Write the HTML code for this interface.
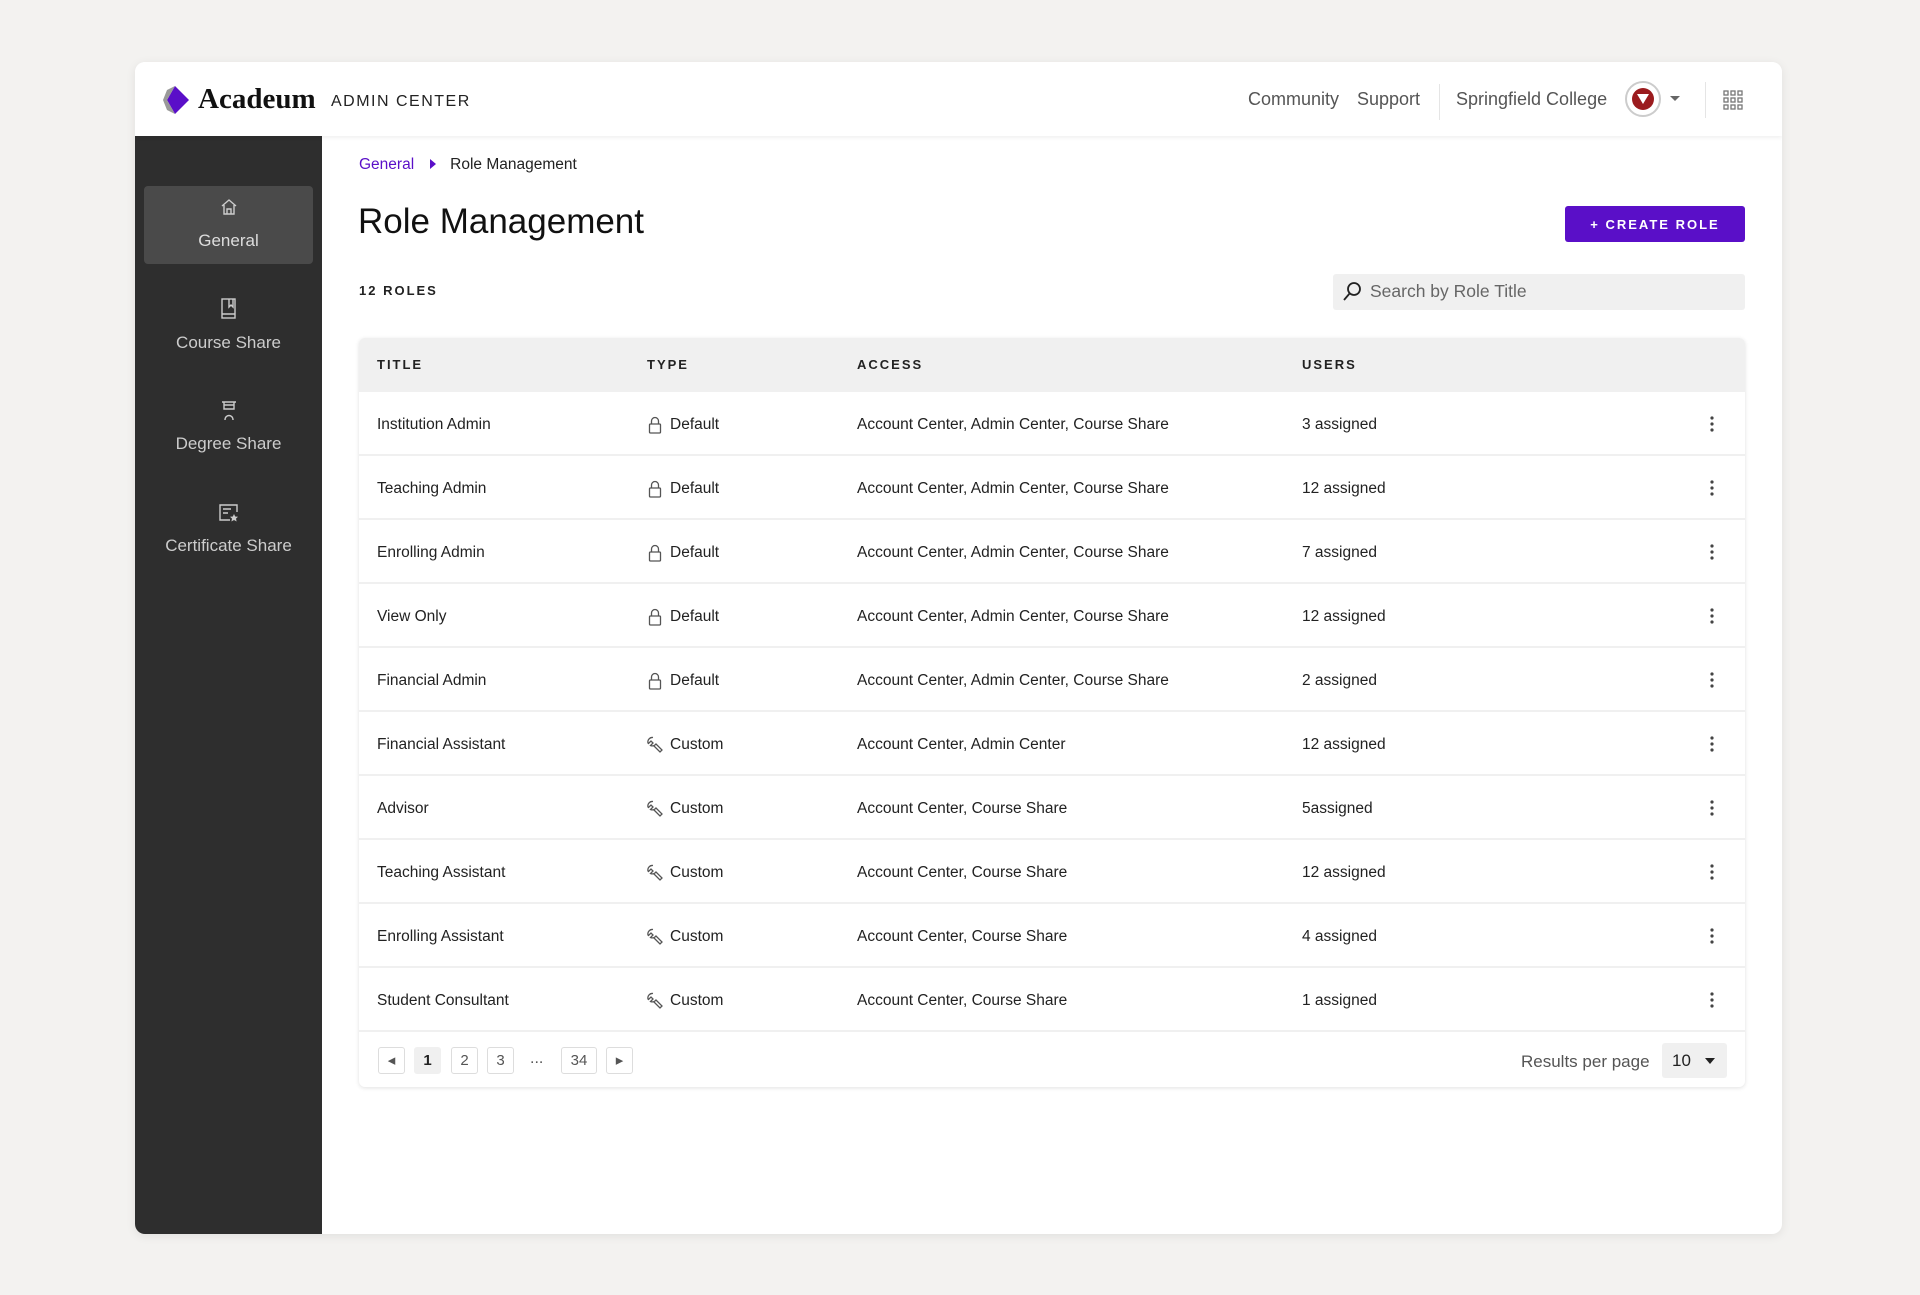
<!DOCTYPE html>
<html><head><meta charset="utf-8"><style>
*{box-sizing:border-box;margin:0;padding:0}
body{width:1920px;height:1295px;background:#f3f2f0;font-family:"Liberation Sans",sans-serif;color:#222;position:relative;overflow:hidden}
.card{position:absolute;left:135px;top:62px;width:1647px;height:1172px;background:#fff;border-radius:10px;box-shadow:0 2px 10px rgba(0,0,0,.08);overflow:hidden}
.hdr{position:absolute;left:0;top:0;width:100%;height:74px;background:#fff;box-shadow:0 2px 4px rgba(0,0,0,.06);z-index:2}
.side{position:absolute;left:0;top:74px;width:187px;bottom:0;background:#2e2e2e}
.abs{position:absolute}
.nav{font-size:18px;color:#555;top:27px}
.si{position:absolute;left:0;width:187px;text-align:center;color:#ccc;font-size:17px}
.row{position:absolute;left:359px;width:1386px;height:64px;border-bottom:2px solid #f0f0f0;font-size:15.5px;color:#222}
.row span{position:absolute;top:24px}
.th{position:absolute;top:19px;font-size:13px;font-weight:bold;letter-spacing:2px;color:#222}
.pb{position:absolute;top:1047px;height:27px;border:1px solid #ddd;border-radius:3px;font-size:15px;text-align:center;line-height:25px;color:#555}
</style></head><body>
<div class="card">
 <div class="hdr">
  <svg class="abs" style="left:28px;top:24px" width="26" height="28" viewBox="0 0 26 28"><polygon points="12,0 26,14 12,28 4,14" fill="#5a0fc8"/><polygon points="4,4 12,0 4,14 12,28 4,24 0,14" fill="#999"/></svg>
  <div class="abs" style="left:63px;top:21px;font-family:'Liberation Serif',serif;font-weight:bold;font-size:29px;color:#111">Acadeum</div>
  <div class="abs" style="left:196px;top:31px;font-size:16px;letter-spacing:1.5px;color:#222">ADMIN CENTER</div>
  <div class="abs nav" style="left:1113px">Community</div>
  <div class="abs nav" style="left:1222px">Support</div>
  <div class="abs" style="left:1304px;top:22px;width:1px;height:36px;background:#e5e5e5"></div>
  <div class="abs nav" style="left:1321px">Springfield College</div>
  <div class="abs" style="left:1490px;top:19px;width:36px;height:36px;border-radius:50%;border:2px solid #ccc;background:#fff"><div style="position:absolute;left:5px;top:5px;width:22px;height:22px;border-radius:50%;background:#9b1b1e"></div><div style="position:absolute;left:10px;top:11px;width:0;height:0;border-left:6px solid transparent;border-right:6px solid transparent;border-top:10px solid #fff"></div></div>
  <div class="abs" style="left:1535px;top:34px;border-left:5px solid transparent;border-right:5px solid transparent;border-top:5px solid #666"></div>
  <div class="abs" style="left:1570px;top:20px;width:1px;height:36px;background:#e5e5e5"></div>
  <svg class="abs" style="left:1588px;top:28px" width="20" height="20" viewBox="0 0 20 20" fill="none" stroke="#777" stroke-width="1.3"><rect x="1" y="1" width="4" height="4"/><rect x="8" y="1" width="4" height="4"/><rect x="15" y="1" width="4" height="4"/><rect x="1" y="8" width="4" height="4"/><rect x="8" y="8" width="4" height="4"/><rect x="15" y="8" width="4" height="4"/><rect x="1" y="15" width="4" height="4"/><rect x="8" y="15" width="4" height="4"/><rect x="15" y="15" width="4" height="4"/></svg>
 </div>
 <div class="side">
  <div class="abs" style="left:9px;top:50px;width:169px;height:78px;background:#4a4a4a;border-radius:4px"></div>
  <svg class="abs" style="left:84px;top:61px" width="20" height="20" viewBox="0 0 20 20" fill="none" stroke="#ccc" stroke-width="1.4"><path d="M3 9 L10 3 L17 9 M5 8 V17 H15 V8 M8 17 V12 H12 V17"/></svg>
  <div class="si" style="top:95px;color:#ddd">General</div>
  <svg class="abs" style="left:85px;top:162px" width="18" height="22" viewBox="0 0 18 22" fill="none" stroke="#ccc" stroke-width="1.4"><rect x="2" y="1" width="13" height="19"/><path d="M9 1 V9 L11 7 L13 9 V1 M2 16 H15"/></svg>
  <div class="si" style="top:197px">Course Share</div>
  <svg class="abs" style="left:84px;top:264px" width="20" height="22" viewBox="0 0 20 22" fill="none" stroke="#ccc" stroke-width="1.4"><path d="M3 2 H17 M5 2 V9 H15 V2 M5 5 H15 M6 20 C6 14 14 14 14 20"/></svg>
  <div class="si" style="top:298px">Degree Share</div>
  <svg class="abs" style="left:83px;top:367px" width="22" height="20" viewBox="0 0 22 20" fill="none" stroke="#ccc" stroke-width="1.4"><path d="M12 17 H2 V2 H19 V9 M5 6 H13 M5 10 H10"/><path d="M16 11 L17.2 13.5 L20 13.8 L18 15.6 L18.6 18.5 L16 17 L13.4 18.5 L14 15.6 L12 13.8 L14.8 13.5Z" fill="#ccc" stroke="none"/></svg>
  <div class="si" style="top:400px">Certificate Share</div>
 </div>
</div>
<div class="abs" style="left:359px;top:156px;font-size:15.5px"><span style="color:#5a0fc8">General</span><span style="display:inline-block;margin:0 14px 0 16px;border-top:5px solid transparent;border-bottom:5px solid transparent;border-left:6px solid #5a0fc8"></span>Role Management</div>
<div class="abs" style="left:358px;top:202px;font-size:35px;color:#111">Role Management</div>
<div class="abs" style="left:1565px;top:206px;width:180px;height:36px;background:#5a0fc8;border-radius:3px;color:#fff;font-size:13px;font-weight:bold;letter-spacing:2px;text-align:center;line-height:37px">+ CREATE ROLE</div>
<div class="abs" style="left:359px;top:283px;font-size:13px;font-weight:bold;letter-spacing:2px">12 ROLES</div>
<div class="abs" style="left:1333px;top:274px;width:412px;height:36px;background:#f0f0f0;border-radius:3px"></div>
<svg class="abs" style="left:1342px;top:281px" width="20" height="21" viewBox="0 0 20 21" fill="none" stroke="#222" stroke-width="1.8"><circle cx="12" cy="8" r="6"/><path d="M8 12 L2 19"/></svg>
<div class="abs" style="left:1370px;top:281px;font-size:17.5px;color:#666">Search by Role Title</div>
<div class="abs" style="left:359px;top:338px;width:1386px;height:749px;border-radius:6px;box-shadow:0 1px 4px rgba(0,0,0,.12);background:#fff"></div>
<div class="abs" style="left:359px;top:338px;width:1386px;height:54px;background:#f0f0f0;border-radius:6px 6px 0 0">
 <div class="th" style="left:18px">TITLE</div><div class="th" style="left:288px">TYPE</div><div class="th" style="left:498px">ACCESS</div><div class="th" style="left:943px">USERS</div>
</div>
<div id="rows"></div>
<div class="pb" style="left:378px;width:27px">◂</div>
<div class="pb" style="left:414px;width:27px;background:#f0f0f0;border-color:#f0f0f0;color:#222;font-weight:bold">1</div>
<div class="pb" style="left:451px;width:27px">2</div>
<div class="pb" style="left:487px;width:27px">3</div>
<div class="abs" style="left:530px;top:1050px;color:#555">...</div>
<div class="pb" style="left:561px;width:36px">34</div>
<div class="pb" style="left:606px;width:27px">▸</div>
<div class="abs" style="left:1521px;top:1052px;font-size:17px;color:#555">Results per page</div>
<div class="abs" style="left:1662px;top:1043px;width:65px;height:35px;background:#f0f0f0;border-radius:3px;font-size:17px;line-height:36px;padding-left:10px">10<span style="position:absolute;left:43px;top:15px;border-left:5px solid transparent;border-right:5px solid transparent;border-top:6px solid #222"></span></div>
<script>
var d=[["Institution Admin",0,"Account Center, Admin Center, Course Share","3 assigned"],["Teaching Admin",0,"Account Center, Admin Center, Course Share","12 assigned"],["Enrolling Admin",0,"Account Center, Admin Center, Course Share","7 assigned"],["View Only",0,"Account Center, Admin Center, Course Share","12 assigned"],["Financial Admin",0,"Account Center, Admin Center, Course Share","2 assigned"],["Financial Assistant",1,"Account Center, Admin Center","12 assigned"],["Advisor",1,"Account Center, Course Share","5assigned"],["Teaching Assistant",1,"Account Center, Course Share","12 assigned"],["Enrolling Assistant",1,"Account Center, Course Share","4 assigned"],["Student Consultant",1,"Account Center, Course Share","1 assigned"]];
var lock='<svg width="14" height="18" viewBox="0 0 14 18" fill="none" stroke="#555" stroke-width="1.3" style="position:absolute;left:-22px;top:0"><rect x="1.5" y="8" width="11" height="9" rx="1"/><path d="M3.5 8 V5 A3.5 3.5 0 0 1 10.5 5 V8"/></svg>';
var wr='<svg width="18" height="18" viewBox="0 0 18 18" fill="none" stroke="#555" stroke-width="1.3" style="position:absolute;left:-24px;top:0"><path d="M7 1.5 A4.5 4.5 0 0 0 2 7 L2.5 7.5 L5 5 L7 7 L4.5 9.5 A4.5 4.5 0 0 0 10 8 L16 14 L14 16 L8 10"/></svg>';
var dots='<svg width="4" height="16" viewBox="0 0 4 16" style="position:absolute;left:1351px;top:24px"><circle cx="2" cy="2" r="1.6" fill="#444"/><circle cx="2" cy="8" r="1.6" fill="#444"/><circle cx="2" cy="14" r="1.6" fill="#444"/></svg>';
var h='';d.forEach(function(r,i){var t=392+i*64;h+='<div class="row" style="top:'+t+'px"><span style="left:18px">'+r[0]+'</span><span style="left:311px">'+(r[1]?wr+'Custom':lock+'Default')+'</span><span style="left:498px">'+r[2]+'</span><span style="left:943px">'+r[3]+'</span>'+dots+'</div>'});
document.getElementById('rows').innerHTML=h;
</script>
</body></html>
